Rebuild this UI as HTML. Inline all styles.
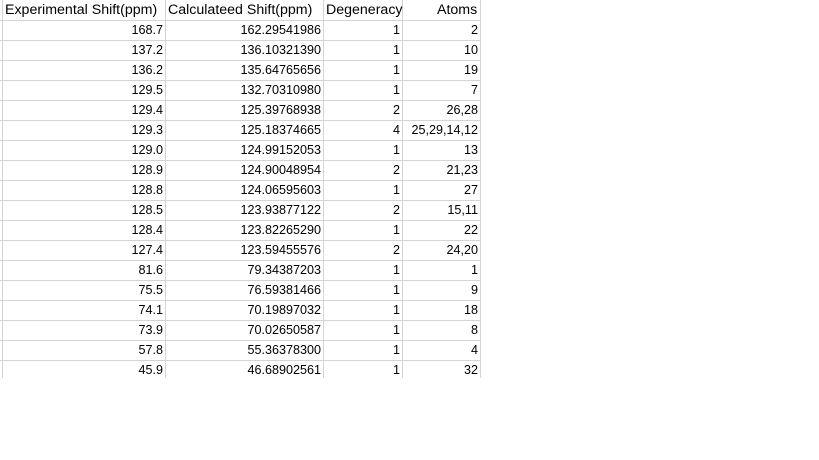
<!DOCTYPE html>
<html><head><style>
body{margin:0;width:819px;height:460px;background:#fff;position:relative;overflow:hidden;font-family:"Liberation Sans",sans-serif;font-size:12.6px;color:#000}
.h{position:absolute;height:1px;background:#d4d4d4;left:0;width:481px}
.v{position:absolute;width:1px;background:#d4d4d4;top:0;height:378px}
.c{position:absolute;height:20px;line-height:21px;white-space:nowrap}
.r{text-align:right}
.hd{font-size:14.2px}
</style></head><body>
<div class="v" style="left:2px"></div>
<div class="v" style="left:165px"></div>
<div class="v" style="left:323px"></div>
<div class="v" style="left:402px"></div>
<div class="v" style="left:480px"></div>
<div id="g"></div>
<div class="c hd" style="left:5px;top:0">Experimental Shift(ppm)</div>
<div class="c hd" style="left:168px;top:0">Calculateed Shift(ppm)</div>
<div class="c hd" style="left:326px;top:0">Degeneracy</div>
<div class="c hd" style="left:437px;top:0">Atoms</div>
<script>
var d=[["168.7","162.29541986","1","2"],["137.2","136.10321390","1","10"],["136.2","135.64765656","1","19"],["129.5","132.70310980","1","7"],["129.4","125.39768938","2","26,28"],["129.3","125.18374665","4","25,29,14,12"],["129.0","124.99152053","1","13"],["128.9","124.90048954","2","21,23"],["128.8","124.06595603","1","27"],["128.5","123.93877122","2","15,11"],["128.4","123.82265290","1","22"],["127.4","123.59455576","2","24,20"],["81.6","79.34387203","1","1"],["75.5","76.59381466","1","9"],["74.1","70.19897032","1","18"],["73.9","70.02650587","1","8"],["57.8","55.36378300","1","4"],["45.9","46.68902561","1","32"]];
var h='';for(var i=1;i<=18;i++)h+='<div class="h" style="top:'+(i*20)+'px"></div>';
var R=[[0,163],[166,321],[324,400],[403,478]];
d.forEach(function(r,i){var t=20+i*20;r.forEach(function(v,j){h+='<div class="c r" style="left:'+R[j][0]+'px;width:'+(R[j][1]-R[j][0])+'px;top:'+t+'px">'+v+'</div>';});});
document.getElementById('g').innerHTML=h;
</script>
</body></html>
